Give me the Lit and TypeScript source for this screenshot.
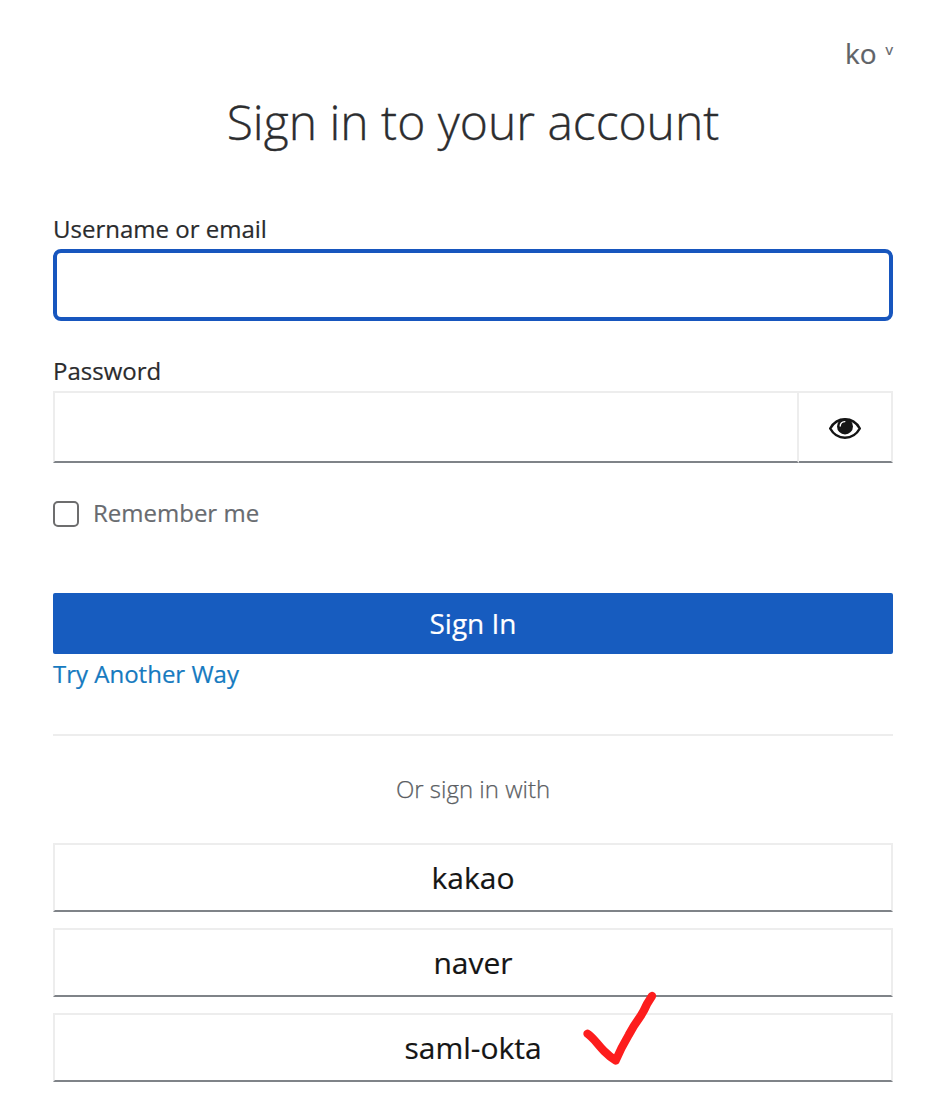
import { LitElement, html, css } from "lit";
import { customElement, state } from "lit/decorators.js";

@customElement("app-root")
class AppRoot extends LitElement {
  @state() private providers = ["kakao", "naver", "saml-okta"];

  static styles = css`
    :host { display: block; height: 1104px; overflow: hidden; background: #fff; color: #151515; font-family: "Open Sans", sans-serif; }
    * { box-sizing: border-box; }
    .page { padding: 33px 39px 0 53px; display: flex; flex-direction: column; }
    .locale { display: flex; justify-content: flex-end; gap: 9px; height: 40px; line-height: 40px; font-size: 28px; color: #5f6368; -webkit-text-stroke: 0.2px; }
    .caret { font-size: 15px; line-height: 32px; }
    h1 { margin: 15px 0 0; font-size: 48px; line-height: 68px; font-weight: 300; text-align: center; color: #2c2d2f; -webkit-text-stroke: 0.35px; }
    .label { font-size: 24px; line-height: 36px; height: 36px; color: #2a2b2d; -webkit-text-stroke: 0.2px; }
    .user { margin-top: 55px; }
    .input { display: block; width: 100%; height: 72px; border: 2px solid #ededed; border-bottom-color: #7f8388; background: #fff; border-radius: 0; outline: 0; padding: 0 16px; }
    .focused { margin-top: 2px; border: 4px solid #1756be; border-radius: 8px; }
    .pass { margin-top: 32px; }
    .group { display: flex; height: 72px; margin-top: 2px; }
    .group .input { flex: 1; width: auto; }
    .eye { width: 94px; display: grid; place-items: center; border: 2px solid #ededed; border-left: 0; border-bottom-color: #7f8388; background: #fff; padding: 0; }
    .eye svg { display: block; }
    .remember { display: flex; align-items: flex-start; gap: 14px; height: 36px; margin-top: 32px; font-size: 24px; line-height: 36px; color: #686b70; -webkit-text-stroke: 0.2px; }
    .box { width: 26px; height: 26px; margin-top: 6px; border: 2px solid #6d6d6e; border-radius: 5px; }
    .submit { margin-top: 62px; height: 61px; border: 0; border-radius: 2px; background: #175cbf; color: #fff; font: 28px/58px "Open Sans", sans-serif; padding: 0 0 2px; -webkit-text-stroke: 0.2px; }
    .other { font-size: 24px; line-height: 36px; margin-top: 2px; color: #167ac0; -webkit-text-stroke: 0.2px; }
    .rule { height: 2px; background: #ededed; margin-top: 42px; }
    .or { margin-top: 35px; font-size: 24px; line-height: 36px; font-weight: 300; text-align: center; color: #5b5e63; -webkit-text-stroke: 0.25px; }
    .list { display: flex; flex-direction: column; gap: 16px; margin-top: 36px; }
    .provider { height: 69px; border: 2px solid #ededed; border-bottom-color: #7f8388; text-align: center; font-size: 30px; line-height: 65px; -webkit-text-stroke: 0.2px; }
    .target { position: relative; }
    .mark { position: absolute; left: 525px; top: -25px; }
  `;

  render() {
    return html`<main class="page">
      <div class="locale"><span>ko</span><span class="caret">v</span></div>
      <h1>Sign in to your account</h1>
      <label class="label user">Username or email</label>
      <input class="input focused" />
      <label class="label pass">Password</label>
      <div class="group"><input class="input" type="password" />
        <button class="eye" aria-label="Show password"><svg width="34" height="26" viewBox="0 0 34 26"><path d="M2.2 14.5C9 2.2 25 2.2 31.8 14.5C25 26.8 9 26.8 2.2 14.5Z" fill="#fff" stroke="#151515" stroke-width="2.5" stroke-linejoin="round"/><circle cx="17" cy="12.4" r="8" fill="#151515"/><path d="M12.2 12Q12.4 7.9 16.8 7.6" fill="none" stroke="#fff" stroke-width="1.4" stroke-linecap="round"/></svg></button>
      </div>
      <label class="remember"><span class="box"></span>Remember me</label>
      <button class="submit">Sign In</button>
      <a class="other">Try Another Way</a>
      <div class="rule"></div>
      <div class="or">Or sign in with</div>
      <div class="list">${this.providers.map((p) => html`<div class="provider ${p === "saml-okta" ? "target" : ""}">${p}${p === "saml-okta" ? html`<svg class="mark" width="80" height="80" viewBox="0 0 80 80"><path d="M7.5 43.7C13 47 17 54 24 61Q30 67 35.7 70.5Q41 58 48.7 45Q54 35 60 27Q64 21 67 14L72 6" fill="none" stroke="#fd1d1d" stroke-width="8.3" stroke-linecap="round" stroke-linejoin="round"/></svg>` : ""}</div>`)}</div>
    </main>`;
  }
}
